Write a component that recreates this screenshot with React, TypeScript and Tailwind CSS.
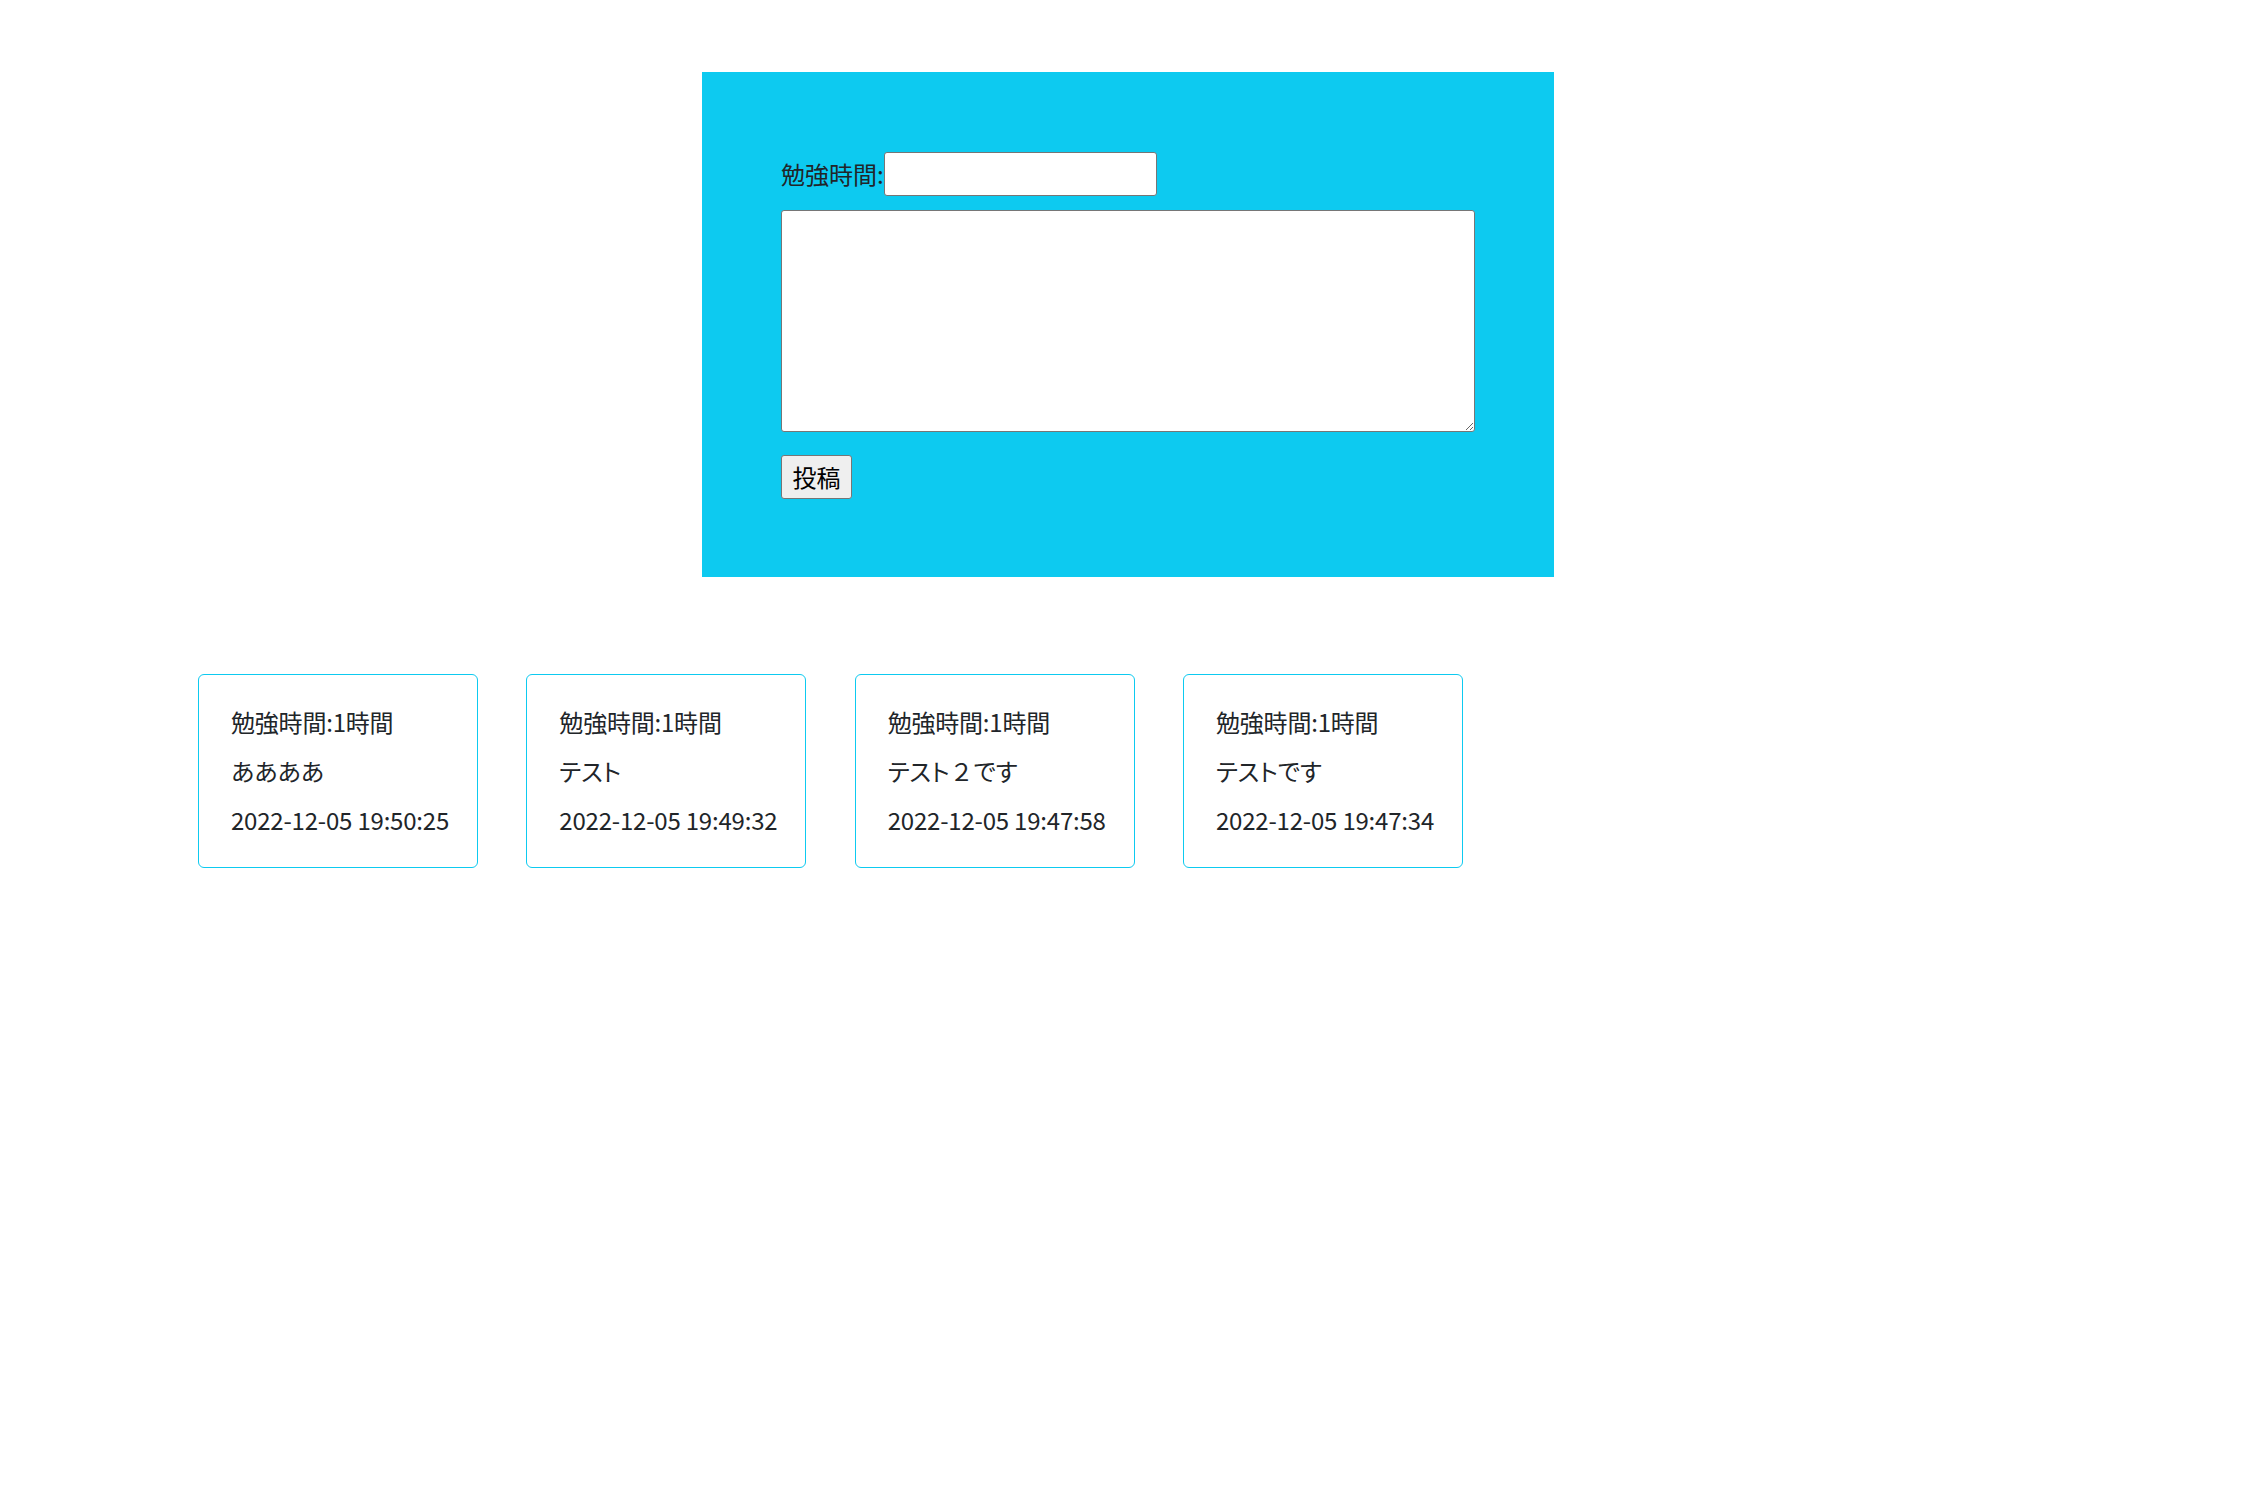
type Post = {
  hours: string
  body: string
  createdAt: string
}

const posts: Post[] = [
  { hours: '1時間', body: 'ああああ', createdAt: '2022-12-05 19:50:25' },
  { hours: '1時間', body: 'テスト', createdAt: '2022-12-05 19:49:32' },
  { hours: '1時間', body: 'テスト２です', createdAt: '2022-12-05 19:47:58' },
  { hours: '1時間', body: 'テストです', createdAt: '2022-12-05 19:47:34' },
]

const PostForm = () => {
  return (
    <section className="mx-auto mt-[72px] w-[852px] bg-[#0dcaf0] px-[79px] pt-[80px] pb-[78px]">
      <div className="flex h-[44px] items-center">
        <label className="text-[24px] leading-[36px] text-[#212529]">勉強時間:</label>
        <input
          type="text"
          className="h-[44px] w-[273px] rounded-[3px] border border-[#767676] bg-white px-2"
        />
      </div>
      <textarea className="mt-[14px] block h-[222px] w-[694px] resize rounded-[3px] border border-[#767676] bg-white" />
      <button className="mt-[23px] block h-[44px] w-[71px] rounded-[3px] border border-[#767676] bg-[#efefef] text-[24px] leading-none text-black">
        投稿
      </button>
    </section>
  )
}

// kana get proportional widths, full-width digits keep their full cell
const Body = ({ text }: { text: string }) => (
  <p className="mt-[13px]">
    {text.split(/([０-９])/).map((part, i) =>
      /^[０-９]$/.test(part) ? (
        <span key={i}>{part}</span>
      ) : (
        <span key={i} className="[font-feature-settings:'palt']">
          {part}
        </span>
      )
    )}
  </p>
)

const PostCard = ({ hours, body, createdAt }: Post) => {
  return (
    <div className="w-[280px] rounded-[6px] border border-[#0dcaf0] bg-white pt-[29px] pb-[29px] pl-[32px] text-[24px] leading-[36px] text-[#212529]">
      <p className="tracking-[-0.2px]">勉強時間:{hours}</p>
      <Body text={body} />
      <p className="mt-[13px] tracking-[-0.2px]">{createdAt}</p>
    </div>
  )
}

export default function App() {
  return (
    <div
      className="min-h-[1504px] bg-white"
      style={{ fontFamily: '"Noto Sans CJK JP", "Noto Sans", sans-serif' }}
    >
      <PostForm />
      <div className="mt-[97px] flex gap-[48.33px] pl-[198px]">
        {posts.map((post, index) => (
          <PostCard key={index} {...post} />
        ))}
      </div>
    </div>
  )
}
